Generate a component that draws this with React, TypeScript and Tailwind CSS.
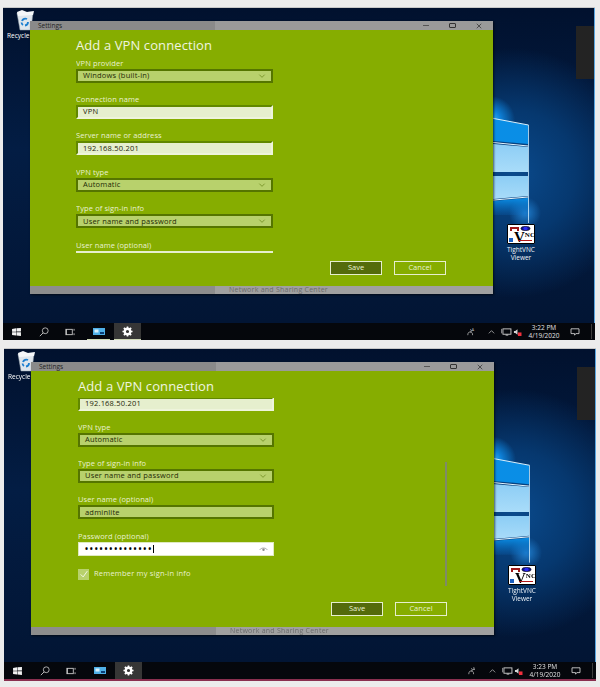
import React from "react";

const FONT = { fontFamily: '"Open Sans", "Noto Sans", sans-serif' };

function Wallpaper({ id }: { id: string }) {
  return (
    <svg className="absolute inset-0 h-full w-full" viewBox="0 0 592 315" preserveAspectRatio="none">
      <defs>
        <linearGradient id={`${id}base`} x1="0" y1="0" x2="0" y2="1">
          <stop offset="0" stopColor="#01112e" />
          <stop offset="0.45" stopColor="#031d44" />
          <stop offset="1" stopColor="#021534" />
        </linearGradient>
        <radialGradient id={`${id}glow`} cx="510" cy="165" r="125" gradientUnits="userSpaceOnUse">
          <stop offset="0" stopColor="#0a4a8c" />
          <stop offset="0.5" stopColor="#06386f" />
          <stop offset="1" stopColor="#06386f" stopOpacity="0" />
        </radialGradient>
        <radialGradient id={`${id}hot`} cx="488" cy="112" r="24" gradientUnits="userSpaceOnUse">
          <stop offset="0" stopColor="#38bcff" />
          <stop offset="0.4" stopColor="#0d80d8" />
          <stop offset="1" stopColor="#0d80d8" stopOpacity="0" />
        </radialGradient>
        <radialGradient id={`${id}low`} cx="522" cy="205" r="16" gradientUnits="userSpaceOnUse">
          <stop offset="0" stopColor="#1f7fd0" />
          <stop offset="1" stopColor="#1f7fd0" stopOpacity="0" />
        </radialGradient>
        <linearGradient id={`${id}pane`} x1="0" y1="0" x2="0" y2="1">
          <stop offset="0" stopColor="#8ccdf5" />
          <stop offset="1" stopColor="#a9dcf9" />
        </linearGradient>
        <linearGradient id={`${id}fade`} x1="0" y1="0" x2="0" y2="1">
          <stop offset="0" stopColor="#0a8ee6" />
          <stop offset="1" stopColor="#0a6cc0" stopOpacity="0.2" />
        </linearGradient>
      </defs>
      <rect width="592" height="315" fill={`url(#${id}base)`} />
      <rect width="592" height="315" fill={`url(#${id}glow)`} />
      <rect width="592" height="315" fill={`url(#${id}hot)`} />
      <rect width="592" height="315" fill={`url(#${id}low)`} />
      <polygon points="480,109 525,117 525,136 480,132" fill="#0a8ee6" />
      <polygon points="480,135 525,139 525,164 480,164" fill={`url(#${id}pane)`} />
      <polygon points="480,168 525,168 525,188 480,192" fill={`url(#${id}pane)`} />
      <polygon points="480,194 525,190 525,207 480,207" fill={`url(#${id}fade)`} />
      <line x1="480" y1="133.5" x2="525" y2="138" stroke="#e6f6ff" strokeWidth="1" />
      <line x1="480" y1="193" x2="525" y2="189" stroke="#e6f6ff" strokeWidth="1" />
      <line x1="480" y1="108.5" x2="525.5" y2="117" stroke="#d9f2ff" strokeWidth="1" />
      <line x1="525.5" y1="117" x2="525.5" y2="215" stroke="#cfeeff" strokeWidth="0.8" />
    </svg>
  );
}

function RecycleBin() {
  return (
    <svg viewBox="0 0 22 22" className="h-[22px] w-[22px]">
      <polygon points="3,3 19,2 17,20 6,20" fill="#dfe6ec" stroke="#9aa6b0" strokeWidth="0.5" />
      <polygon points="3,2 8,0 13,2 20,1 19,5 4,6" fill="#f5f7f9" />
      <path d="M8 11 a3.5 3.5 0 0 1 5-2 M14 12 a3.5 3.5 0 0 1-3 3.5 M9 15 a3.5 3.5 0 0 1-1.5-2.5" fill="none" stroke="#1c7fd0" strokeWidth="1.8" />
    </svg>
  );
}

function VncIcon() {
  return (
    <div className="relative h-[20px] w-[28px] overflow-hidden rounded-[1px] border border-black bg-white">
      <div className="flex items-center gap-[1px] pl-[2px] pt-[1px]">
        <span className="h-[4px] w-[9px] border-x-2 border-t-2 border-[#a01818]" />
        <svg viewBox="0 0 12 6" className="h-[5px] w-[11px]">
          <ellipse cx="6" cy="3" rx="5.5" ry="2.6" fill="#10108a" stroke="#000" strokeWidth="0.6" />
          <ellipse cx="6" cy="3" rx="2.6" ry="2" fill="#2a2af0" />
        </svg>
      </div>
      <div className="flex items-start pl-[6px] leading-none text-black" style={{ fontFamily: '"Liberation Serif", serif' }}>
        <span className="text-[15px] font-bold leading-[12px]">V</span>
        <span className="text-[7px] font-bold leading-[9px]">NC</span>
      </div>
      <div className="absolute bottom-[2px] right-[2px] h-[1px] w-[14px] bg-[#b01818]" />
      <div className="absolute bottom-0 left-0 flex h-[6px] w-[6px] items-center justify-center bg-white">
        <span className="h-[4px] w-[4px] bg-[#1a5fc0]" />
      </div>
    </div>
  );
}

function Chevron() {
  return (
    <svg viewBox="0 0 10 6" className="h-[4px] w-[8px]">
      <path d="M1 1l4 4 4-4" fill="none" stroke="#5f7d10" strokeWidth="1" />
    </svg>
  );
}

function Label({ children }: { children: React.ReactNode }) {
  return <div className="h-[10px] text-[7.5px] leading-[10px] tracking-[0.1px] text-[#e9f1d2]">{children}</div>;
}

function Select({ label, value }: { label: string; value: string }) {
  return (
    <div className="flex flex-col gap-[1px]">
      <Label>{label}</Label>
      <div className="flex h-[14px] items-center justify-between border-2 border-[#557500] bg-[#b8d16c] pl-[5px] pr-[5px] text-[7.5px] tracking-[0.2px] text-[#1f2a05]">
        <span>{value}</span>
        <Chevron />
      </div>
    </div>
  );
}

function TextBox({ label, value }: { label?: string; value: string }) {
  return (
    <div className="flex flex-col gap-[1px]">
      {label && <Label>{label}</Label>}
      <div className="flex h-[14px] items-center border-2 border-[#618800] border-b-[#eef4dc] border-r-[#eef4dc] bg-[#e6efce] pl-[5px] text-[7.5px] tracking-[0.2px] text-[#1c2408]">
        {value}
      </div>
    </div>
  );
}

function Dim({ label, value }: { label: string; value: string }) {
  return (
    <div className="flex flex-col gap-[1px]">
      <Label>{label}</Label>
      <div className="flex h-[14px] items-center border-2 border-[#557500] bg-[#b8d16c] pl-[5px] text-[7.5px] tracking-[0.2px] text-[#1c2408]">
        {value}
      </div>
    </div>
  );
}

function FormFirst() {
  return (
    <div className="flex w-[197px] flex-col gap-[11.4px] pt-[0.6px]">
      <Select label="VPN provider" value="Windows (built-in)" />
      <TextBox label="Connection name" value="VPN" />
      <TextBox label="Server name or address" value="192.168.50.201" />
      <Select label="VPN type" value="Automatic" />
      <Select label="Type of sign-in info" value="User name and password" />
      <div className="flex flex-col gap-[1px]">
        <Label>User name (optional)</Label>
        <div className="h-[14px] bg-[#e6efce]" />
      </div>
    </div>
  );
}

function FormSecond() {
  return (
    <div className="mt-[-1.5px] flex w-[196px] flex-col gap-[11.3px]">
      <TextBox value="192.168.50.201" />
      <Select label="VPN type" value="Automatic" />
      <Select label="Type of sign-in info" value="User name and password" />
      <Dim label="User name (optional)" value="adminlite" />
      <div className="flex flex-col gap-[1px]">
        <Label>Password (optional)</Label>
        <div className="flex h-[14px] items-center justify-between border border-[#dfeac0] bg-white pl-[6px] pr-[5px] text-black">
          <span className="flex items-center">
            <span className="text-[8px] font-bold leading-none tracking-[1.85px]">••••••••••••••</span>
            <span className="h-[8px] w-[1px] bg-black" />
          </span>
          <svg viewBox="0 0 12 8" className="h-[6px] w-[9px]">
            <path d="M1 5c2-3 8-3 10 0" fill="none" stroke="#8a8a8a" strokeWidth="1" />
            <circle cx="6" cy="5" r="1.6" fill="#8a8a8a" />
          </svg>
        </div>
      </div>
      <div className="mt-[1.5px] flex items-center gap-[5px]">
        <div className="flex h-[11px] w-[11px] items-center justify-center bg-[#b8d16c]">
          <svg viewBox="0 0 12 12" className="h-[10px] w-[10px]">
            <path d="M2 6.500l3 3 5-7" fill="none" stroke="#f2f7e2" strokeWidth="1.2" />
          </svg>
        </div>
        <span className="text-[7.5px] tracking-[0.2px] text-[#e9f1d2]">Remember my sign-in info</span>
      </div>
    </div>
  );
}

function SettingsWindow({ second, className }: { second?: boolean; className: string }) {
  return (
    <div className={`absolute flex h-[273px] w-[463px] flex-col shadow-[1px_1px_2px_rgba(0,0,0,0.6)] ${className}`}>
      <div className="flex h-[9px] shrink-0 bg-[#9a9a9a]">
        <div className="flex w-[185px] items-center bg-[#8a8a8a] pl-[8px] text-[6.500px] text-[#222]">Settings</div>
        <div className="ml-auto flex items-center text-[#333]">
          <span className="flex w-[27px] justify-center">
            <span className="h-[1px] w-[6px] bg-[#555]" />
          </span>
          <span className="flex w-[27px] justify-center">
            <span className="h-[5px] w-[7px] rounded-[1px] border border-[#333]" />
          </span>
          <span className="flex w-[27px] justify-center pr-[1px]">
            <svg viewBox="0 0 8 8" className="h-[6px] w-[6px]">
              <path d="M1 1l6 6M7 1l-6 6" stroke="#333" strokeWidth="1" />
            </svg>
          </span>
        </div>
      </div>
      <div className={`relative flex h-[256px] shrink-0 flex-col bg-[#86ad00] ${second ? "pl-[47px]" : "pl-[46px]"}`}>
        <div className="h-[27px] shrink-0 pt-[4.500px] text-[13px] leading-[20px] tracking-[0.1px] text-[#f0f5e0]">
          Add a VPN connection
        </div>
        <div className="min-h-0 flex-1 overflow-hidden">{second ? <FormSecond /> : <FormFirst />}</div>
        <div className="flex h-[33px] shrink-0 justify-end gap-[12px] pr-[47px] pt-[8px]">
          <button className="h-[14px] w-[52px] border border-[#e6efce] bg-[#546b0b] text-[7.5px] text-[#e9f1d2]">Save</button>
          <button className="h-[14px] w-[52px] border border-[#e6efce] text-[7.5px] text-[#e9f1d2]">Cancel</button>
        </div>
        {second && <div className="absolute left-[414px] top-[91px] h-[124px] w-[1.5px] bg-[#7f8a68]" />}
      </div>
      <div className="flex h-[8px] shrink-0 bg-[#a0a0a0]">
        <div className="w-[185px] bg-[#8d8d8d]" />
        <div className="flex flex-1 items-center pl-[14px] text-[7px] tracking-[0.25px] text-[#6c6c6c]">
          Network and Sharing Center
        </div>
      </div>
    </div>
  );
}

function Taskbar({ time, underline }: { time: string; underline?: boolean }) {
  return (
    <div className="relative flex h-[17px] shrink-0 items-center bg-[#05070c] text-white">
      <div className="flex h-full w-[27px] items-center justify-center">
        <svg viewBox="0 0 10 9" className="h-[8px] w-[11px]">
          <path d="M0 1l4.500-.7v3.800H0zM5 .2L10 0v4H5zM0 4.700h4.500v3.700L0 7.800zM5 4.700h5V9l-5-.6z" fill="#f2f2f2" />
        </svg>
      </div>
      <div className="flex h-full w-[27px] items-center justify-center">
        <svg viewBox="0 0 12 12" className="h-[10px] w-[10px]">
          <circle cx="7.500" cy="4.500" r="3.500" fill="none" stroke="#c9c9c9" strokeWidth="1" />
          <path d="M5 7L1 11" stroke="#c9c9c9" strokeWidth="1.100" />
        </svg>
      </div>
      <div className="flex h-full w-[27px] items-center justify-center">
        <svg viewBox="0 0 12 9" className="h-[8px] w-[11px]">
          <rect x="1.500" y="1.500" width="6.500" height="6" fill="none" stroke="#c9c9c9" strokeWidth="1" />
          <path d="M0 1v7M10 1v2M10 6v2" stroke="#c9c9c9" strokeWidth="1" />
        </svg>
      </div>
      <div className={`ml-[3px] flex h-full w-[23px] items-center justify-center ${underline ? "border-b border-[#cfd8b4]" : ""}`}>
        <svg viewBox="0 0 12 7" className="h-[7px] w-[12px]">
          <rect width="12" height="7" fill="#4fb0e8" />
          <rect x="1.500" y="1.500" width="4" height="3" fill="#d8effb" />
          <rect x="7" y="4" width="4" height="2" fill="#0a3f78" />
        </svg>
      </div>
      <div className={`ml-[4px] flex h-full w-[27px] items-center justify-center bg-[#363636] ${underline ? "border-b border-[#cfd8b4]" : ""}`}>
        <svg viewBox="0 0 24 24" className="h-[11px] w-[11px]">
          <circle cx="12" cy="12" r="6" fill="none" stroke="#fff" strokeWidth="5" />
          <path d="M12 1v5M12 18v5M1 12h5M18 12h5M4 4l3.500 3.500M16.500 16.500L20 20M20 4l-3.500 3.500M7.500 16.500L4 20" stroke="#fff" strokeWidth="3.500" />
        </svg>
      </div>
      <div className="ml-auto flex h-full items-center pr-[3px]">
        <svg viewBox="0 0 10 10" className="mr-[12.500px] h-[8px] w-[8px]">
          <path d="M1 9c0-3 1-4 3-4s3 1 3 4M4 5a1.500 1.500 0 1 0 0-3" fill="none" stroke="#c9c9c9" strokeWidth="0.9" />
          <text x="6" y="4" fontSize="4.500" fill="#c9c9c9">A</text>
        </svg>
        <svg viewBox="0 0 10 6" className="mr-[6px] h-[4px] w-[7px]">
          <path d="M1 5l4-4 4 4" fill="none" stroke="#d5d5d5" strokeWidth="1" />
        </svg>
        <svg viewBox="0 0 12 9" className="mr-[1px] h-[8px] w-[11px]">
          <rect x="2" y="1" width="9" height="6" fill="none" stroke="#d5d5d5" strokeWidth="1" />
          <path d="M0 1v5M5 8h3" stroke="#d5d5d5" strokeWidth="1" />
        </svg>
        <svg viewBox="0 0 10 9" className="mr-[3.500px] h-[8px] w-[9px]">
          <path d="M1 3.500h1.500L5 1.500v6L2.500 5.500H1z" fill="#d5d5d5" />
          <rect x="5.500" y="5" width="4" height="4" fill="#f0303c" />
        </svg>
        <div className="w-[38px] text-center text-[6.500px] leading-[8px] text-[#e2e2e2]">
          <div>{time}</div>
          <div>4/19/2020</div>
        </div>
        <svg viewBox="0 0 12 10" className="ml-[7px] mr-[11px] h-[8px] w-[10px]">
          <path d="M1 1h10v6H7L5.500 9V7H1z" fill="none" stroke="#e2e2e2" strokeWidth="1" />
        </svg>
        <span className="h-[15px] w-[1px] bg-[#3c3c3c]" />
      </div>
    </div>
  );
}

function Screen({ id, second, time }: { id: string; second?: boolean; time: string }) {
  return (
    <section className={`relative flex h-[333px] w-[592px] flex-col overflow-hidden border-t border-[#c8c8c8] ${second ? "ml-[1px] mt-[8px] border-b-2 border-b-[#8a2f4f]" : "ml-0 mt-[7px]"}`}>
      <div className="relative flex-1 overflow-hidden">
        <Wallpaper id={id} />
        <div className="absolute left-[4px] top-[2px] flex w-[36px] flex-col items-start">
          <div className="ml-[7px]">
            <RecycleBin />
          </div>
          <span className="whitespace-nowrap text-[6.500px] leading-[8px] text-white">Recycle Bin</span>
        </div>
        <div className="absolute left-[499px] top-[216px] flex w-[38px] flex-col items-center text-center text-[6.500px] leading-[8px] text-[#eef3f8]">
          <VncIcon />
          <span className="mt-[2px]">TightVNC</span>
          <span>Viewer</span>
        </div>
        <div className="absolute right-0 top-[18px] h-[53px] w-[19px] bg-[#232323]" />
        <div className="absolute right-0 top-0 h-full w-[1px] bg-[#5aa6e0]" />
        <SettingsWindow second={second} className="left-[27px] top-[13px]" />
      </div>
      <Taskbar time={time} underline={!second} />
    </section>
  );
}

export default function App() {
  return (
    <div className="h-[687px] w-[600px] overflow-hidden bg-[#ececec] pl-[3px]" style={FONT}>
      <div className="flex flex-col blur-[0.35px]">
        <Screen id="a" time="3:22 PM" />
        <Screen id="b" second time="3:23 PM" />
      </div>
    </div>
  );
}
